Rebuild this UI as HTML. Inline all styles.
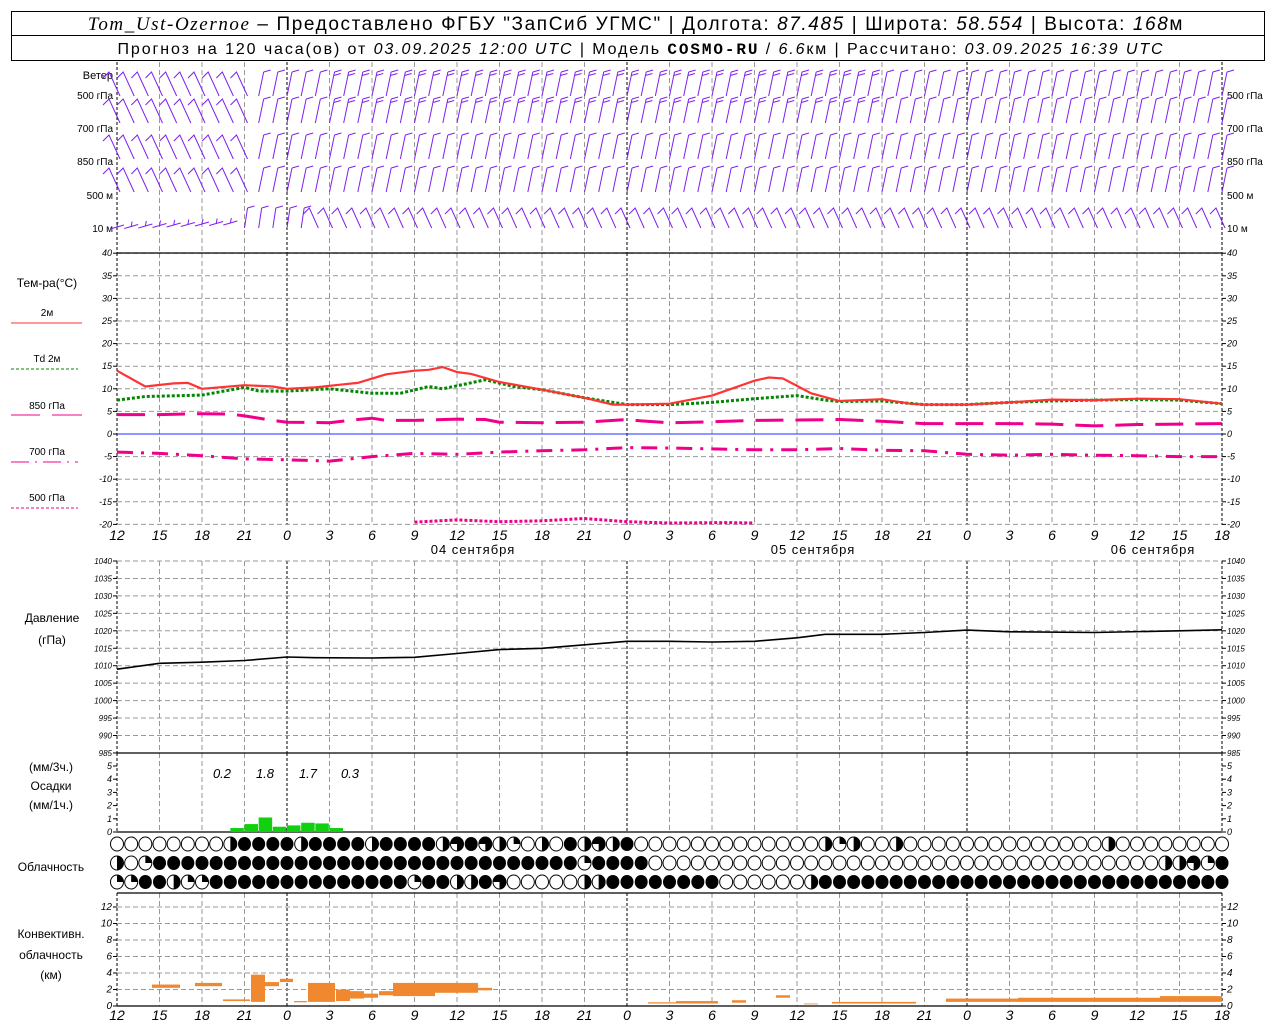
<!DOCTYPE html>
<html><head><meta charset="utf-8">
<style>
html,body{margin:0;padding:0;background:#fff;}
body{width:1280px;height:1024px;overflow:hidden;position:relative;font-family:"Liberation Sans",sans-serif;}
svg{position:absolute;left:0;top:0;}
text{font-family:"Liberation Sans",sans-serif;}
.it{font-style:italic;}
</style></head><body>
<svg id="s" width="1280" height="1024" xmlns="http://www.w3.org/2000/svg">
<rect x="11.5" y="11.5" width="1253" height="49" fill="none" stroke="#000"/>
<line x1="11" y1="35.5" x2="1265" y2="35.5" stroke="#000"/>
<text x="636" y="30" font-size="19" text-anchor="middle" letter-spacing="1.6"><tspan font-family="Liberation Serif" font-style="italic">Tom_Ust-Ozernoe</tspan> – Предоставлено ФГБУ "ЗапСиб УГМС" | Долгота: <tspan font-style="italic">87.485</tspan> | Широта: <tspan font-style="italic">58.554</tspan> | Высота: <tspan font-style="italic">168</tspan>м</text>
<text x="641" y="54" font-size="16" text-anchor="middle" letter-spacing="1.9">Прогноз на 120 часа(ов) от <tspan font-style="italic">03.09.2025 12:00 UTC</tspan>  | Модель <tspan font-family="Liberation Mono" font-weight="bold">COSMO-RU</tspan> / <tspan font-style="italic">6.6</tspan>км | Рассчитано: <tspan font-style="italic">03.09.2025 16:39 UTC</tspan></text>
<g id="g"></g>
</svg>
<script>
var S=document.getElementById('g'),NS='http://www.w3.org/2000/svg';
function el(t,a,txt){var e=document.createElementNS(NS,t);for(var k in a)e.setAttribute(k,a[k]);if(txt!==undefined)e.textContent=txt;S.appendChild(e);return e;}
function X(h){return 117+h*14.1667;}
var L=117,R=1222;
function vgrid(y1,y2){for(var h=0;h<=78;h+=3){var day=(h==12||h==36||h==60);var edge=(h==0||h==78);
el('line',{x1:X(h),y1:y1,x2:X(h),y2:y2,stroke:(day||edge)?'#000':'#999','stroke-dasharray':(day||edge)?'3,2':'5,3','stroke-width':1});}}
vgrid(62,253);vgrid(253,525);vgrid(561,753);vgrid(753,832);vgrid(893,1006);
function hgrid(y,lab,yl,sz){el('line',{x1:L,y1:y,x2:R,y2:y,stroke:'#999','stroke-dasharray':'5,3'});
el('line',{x1:L-4,y1:y,x2:L,y2:y,stroke:'#000'});el('line',{x1:R,y1:y,x2:R+4,y2:y,stroke:'#000'});
el('text',{x:L-5,y:y+3,'font-size':sz||9,'text-anchor':'end','class':'it'},lab);el('text',{x:R+5,y:y+3,'font-size':sz||9,'class':'it'},lab);}
for(var t=40;t>=-20;t-=5){var y=434-t*4.52;hgrid(y,t);}
el('line',{x1:L,y1:434,x2:R,y2:434,stroke:'#2030ff','stroke-width':1});
for(var p=1040;p>=985;p-=5){var y=561+(1040-p)*3.49;hgrid(y,p,0,8);}
for(var k=0;k<=5;k++){var y=832-k*13.2;el('line',{x1:L-4,y1:y,x2:L,y2:y,stroke:'#000'});el('line',{x1:R,y1:y,x2:R+4,y2:y,stroke:'#000'});
el('text',{x:L-5,y:y+3,'font-size':9,'text-anchor':'end','class':'it'},k);el('text',{x:R+5,y:y+3,'font-size':9,'class':'it'},k);}
for(var k=0;k<=12;k+=2){var y=1006-k*8.25;hgrid(y,k,0,10);}
[[253],[753],[832],[893],[1006]].forEach(function(a){el('line',{x1:L,y1:a[0],x2:R,y2:a[0],stroke:'#000','stroke-width':1.3});});
var hl=[12,15,18,21,0,3,6,9];
function tlabels(y){for(var h=0;h<=78;h+=3){el('text',{x:X(h),y:y,'font-size':14,'text-anchor':'middle','class':'it'},hl[(h/3)%8]);}}
tlabels(540);tlabels(1020);
[['04 сентября',473],['05 сентября',813],['06 сентября',1153]].forEach(function(d){el('text',{x:d[1],y:554,'font-size':13,'text-anchor':'middle','letter-spacing':'1'},d[0]);});
function lt(x,y,s,sz,anc){el('text',{x:x,y:y,'font-size':sz||12,'text-anchor':anc||'middle'},s);}
lt(113,79,'Ветер',11,'end');
[['500 гПа',99],['700 гПа',132],['850 гПа',165],['500 м',199],['10  м',232]].forEach(function(a){
 el('text',{x:113,y:a[1],'font-size':10,'text-anchor':'end'},a[0]);el('text',{x:1227,y:a[1],'font-size':10},a[0]);});
lt(47,287,'Тем-ра(°C)',12);lt(47,316,'2м',10);lt(47,362,'Td  2м',10);lt(47,409,'850 гПа',10);lt(47,455,'700 гПа',10);lt(47,501,'500 гПа',10);
el('line',{x1:11,y1:323,x2:82,y2:323,stroke:'#f33','stroke-width':1});
el('line',{x1:11,y1:369,x2:78,y2:369,stroke:'#080','stroke-dasharray':'3,2'});
el('line',{x1:11,y1:415,x2:40,y2:415,stroke:'#f0008a'});el('line',{x1:52,y1:415,x2:82,y2:415,stroke:'#f0008a'});
el('line',{x1:11,y1:462,x2:78,y2:462,stroke:'#f0008a','stroke-dasharray':'18,6,2,6'});
el('line',{x1:11,y1:508,x2:78,y2:508,stroke:'#f0008a','stroke-dasharray':'3,2'});
lt(52,622,'Давление',12);lt(52,644,'(гПа)',12);
lt(51,771,'(мм/3ч.)',12);lt(51,790,'Осадки',12);lt(51,809,'(мм/1ч.)',12);
lt(51,871,'Облачность',12);
lt(51,938,'Конвективн.',12);lt(51,959,'облачность',12);lt(51,979,'(км)',12);
function curve(pts,f,attrs){var d='';pts.forEach(function(p,i){d+=(i?'L':'M')+X(p[0]).toFixed(1)+','+f(p[1]).toFixed(1);});attrs.d=d;attrs.fill='none';el('path',attrs);}
function TY(t){return 434-t*4.52;}
curve([[21,-19.5],[24,-19],[27,-19.4],[30,-19.2],[33,-18.7],[36,-19.4],[39,-19.7],[43,-19.6],[45,-19.7]],TY,{stroke:'#f0008a','stroke-width':3,'stroke-dasharray':'3,2'});
curve([[0,-4],[3,-4.3],[6,-4.8],[9,-5.5],[12,-5.7],[15,-6],[18,-5],[21,-4.3],[24,-4.5],[27,-4],[30,-3.7],[33,-3.5],[36,-3],[39,-3.1],[42,-3.3],[45,-3.5],[48,-3.5],[51,-3.2],[54,-3.6],[57,-3.7],[60,-4.5],[63,-4.7],[66,-4.5],[69,-4.7],[72,-4.8],[75,-5],[78,-5]],TY,{stroke:'#f0008a','stroke-width':3,'stroke-dasharray':'16,8,3,8'});
curve([[0,4.3],[3,4.3],[6,4.5],[8,4.4],[9,4],[11,3],[12,2.6],[15,2.5],[17,3.2],[18,3.5],[19,3],[21,3],[24,3.3],[26,3.2],[27,2.6],[30,2.5],[33,2.6],[36,3.2],[37,2.9],[39,2.5],[42,2.7],[45,3],[48,3.1],[51,3.2],[54,2.8],[57,2.3],[60,2.3],[63,2.3],[66,2.2],[69,1.8],[72,2.1],[75,2.2],[78,2.3]],TY,{stroke:'#f0008a','stroke-width':3,'stroke-dasharray':'28,12'});
curve([[0,7.5],[2,8.3],[6,8.6],[9,10.3],[10,9.5],[12,9.5],[15,10],[18,9],[20,9],[22,10.5],[23,10],[26,12],[28,10.5],[30,9.8],[33,8],[36,6.5],[39,6.5],[42,7],[45,7.8],[48,8.5],[50,7.5],[51,7.2],[54,7.3],[57,6.5],[60,6.5],[63,7],[66,7.3],[69,7.5],[72,7.6],[75,7.5],[78,6.7]],TY,{stroke:'#080','stroke-width':3,'stroke-dasharray':'3,2'});
curve([[0,14],[2,10.5],[4,11.2],[5,11.3],[6,10],[9,10.8],[11,10.5],[12,10],[14,10.3],[16,11],[17,11.3],[19,13.2],[21,14],[22,14.2],[23,14.8],[24,13.7],[25,13.3],[27,11.5],[30,9.8],[33,8],[35,6.5],[36,6.5],[39,6.7],[42,8.5],[45,11.8],[46,12.5],[47,12.3],[49,9],[51,7.3],[54,7.7],[56,6.7],[57,6.5],[60,6.5],[63,7],[66,7.6],[69,7.5],[72,7.8],[75,7.7],[78,6.7]],TY,{stroke:'#f33','stroke-width':2.2});
curve([[0,1009],[3,1010.7],[6,1011],[9,1011.5],[12,1012.5],[14,1012.3],[18,1012.2],[21,1012.4],[24,1013.5],[27,1014.6],[30,1015],[33,1016],[36,1017],[39,1017],[42,1016.8],[45,1017],[48,1018],[50,1019],[54,1019],[57,1019.5],[60,1020.2],[63,1019.7],[69,1019.5],[75,1020],[78,1020.3]],function(p){return 561+(1040-p)*3.49;},{stroke:'#000','stroke-width':1.6});
[0.3,0.6,1.1,0.4,0.5,0.7,0.65,0.3].forEach(function(v,i){var x1=X(8+i),h=v*13.2;el('rect',{x:x1,y:832-h,width:13.5,height:h,fill:'#10d010'});});
[['0.2',222],['1.8',265],['1.7',308],['0.3',350]].forEach(function(a){el('text',{x:a[1],y:778,'font-size':13,'text-anchor':'middle','class':'it'},a[0]);});
var rows=[
'OOOOOOOOHFFFFHFFFFHFFFFHTFTHQOHOFHTHFOOOOOOOOOOOOOHQHOOHOOOOOOOOOOOOOOHOOOOOOOO',
'HOQFFFFFFFFFFFFFFFFFFFFFFFFFFFFFFQFFFFOOOOOOOOOOOOOOOOOOOOOOOOOOOOOOOOOOOOHHTQ',
'QQFFHQQFFFFFFFFFFFFFFQFFHHFTOOOOOHHFFFFFFFFOOOOOOHFFFFFFFFFFFFFFFFFFFFFFFFFFFF'];
var cy=[844,863,882];
rows.forEach(function(r,ri){for(var i=0;i<79;i++){var c=r[i]||'F',x=X(i),y=cy[ri],rx=6.5,ry=7;
 if(c=='F'){el('ellipse',{cx:x,cy:y,rx:rx,ry:ry,fill:'#000'});continue;}
 el('ellipse',{cx:x,cy:y,rx:rx,ry:ry,fill:'#fff',stroke:'#000','stroke-width':1});
 if(c=='H'){el('path',{d:'M'+x+','+(y-ry)+' A'+rx+','+ry+' 0 0 1 '+x+','+(y+ry)+'Z',fill:'#000'});}
 if(c=='Q'){el('path',{d:'M'+x+','+y+' L'+x+','+(y-ry)+' A'+rx+','+ry+' 0 0 1 '+(x+rx)+','+y+'Z',fill:'#000'});}
 if(c=='T'){el('path',{d:'M'+x+','+y+' L'+(x-rx)+','+y+' A'+rx+','+ry+' 0 1 1 '+x+','+(y+ry)+'Z',fill:'#000'});}
}});
var cb=[[152,180,2.2,2.6],[195,222,2.4,2.8],[223,250,0.6,0.8],[251,265,0.5,3.8],[265,279,2.4,2.9],[280,293,2.9,3.3],[294,307,0.45,0.6],[308,335,0.5,2.8],[336,350,0.6,2.0],[350,364,0.9,1.8],[364,378,1.0,1.5],[379,393,1.3,1.8],[393,435,1.2,2.8],[435,478,1.6,2.8],[478,492,1.9,2.2],
[648,676,0.3,0.45],[676,718,0.3,0.6],[732,746,0.4,0.7],[776,790,1.0,1.3],[804,818,0.2,0.3],[832,916,0.3,0.5],[946,1018,0.5,0.9],[1018,1160,0.5,1.0],[1160,1222,0.5,1.2]];
cb.forEach(function(b){el('rect',{x:b[0],y:1006-b[3]*8.25,width:b[1]-b[0],height:(b[3]-b[2])*8.25,fill:'#f08830'});});
// wind barbs
var tops=[72,99,135,168,208];
for(var r=0;r<5;r++){for(var h=0;h<=78;h++){var x=X(h),yt=tops[r],len=(r==4)?20:24;var d;
 var lean;
 if(r==4){lean=(h<9)?null:(h<14?3:-9);}
 else if(h<10){lean=-11;} else lean=5;
 if(lean===null){var yy=yt+18-h*0.5;d='M'+(x-7)+','+(yy+3)+' L'+(x+7)+','+(yy-1)+' M'+x+','+(yy+1)+' l1,-5';}
 else if(lean<0){d='M'+(x+3)+','+(yt+len)+' L'+(x+3+lean)+','+yt+' l-6,6';}
 else{var xt=x+lean,yb=yt+len;d='M'+x+','+yb+' L'+xt+','+yt;
  var nf=(r<2&&h>14&&h<54)?2:1;
  for(var f=0;f<nf;f++){var fy=yt+f*3.5;var fx=xt-lean*(f*3.5/len);d+=' M'+fx+','+fy+' l7,-2';}}
 el('path',{d:d,stroke:'#8020f0','stroke-width':1,fill:'none'});}}
</script>
</body></html>
